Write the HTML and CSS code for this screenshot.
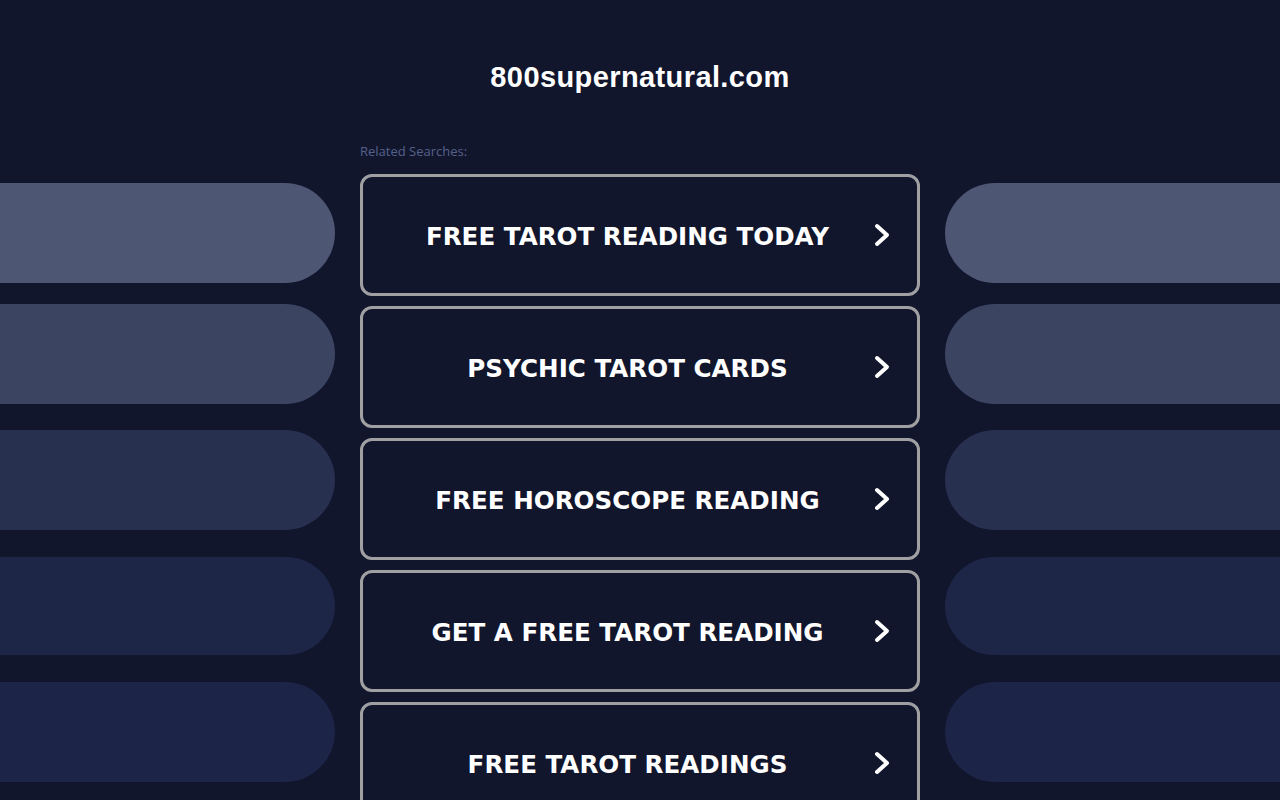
FILE: index.html
```html
<!DOCTYPE html>
<html lang="en">
<head>
<meta charset="utf-8">
<title>800supernatural.com</title>
<link rel="stylesheet" href="styles.css">
</head>
<body>
<header class="header">
  <h1 class="domain">800supernatural.com</h1>
</header>
<div class="layout">
  <div class="rail rail-left">
    <div class="pill p1"></div>
    <div class="pill p2"></div>
    <div class="pill p3"></div>
    <div class="pill p4"></div>
    <div class="pill p5"></div>
  </div>
  <main class="main">
    <div class="related">Related Searches:</div>
    <ul class="links">
      <li><a class="link" href="#"><span class="label">FREE TAROT READING TODAY</span><svg class="chev" viewBox="0 0 16 24" width="16" height="24"><path d="M3 3 L13 12 L3 21"/></svg></a></li>
      <li><a class="link" href="#"><span class="label">PSYCHIC TAROT CARDS</span><svg class="chev" viewBox="0 0 16 24" width="16" height="24"><path d="M3 3 L13 12 L3 21"/></svg></a></li>
      <li><a class="link" href="#"><span class="label">FREE HOROSCOPE READING</span><svg class="chev" viewBox="0 0 16 24" width="16" height="24"><path d="M3 3 L13 12 L3 21"/></svg></a></li>
      <li><a class="link" href="#"><span class="label">GET A FREE TAROT READING</span><svg class="chev" viewBox="0 0 16 24" width="16" height="24"><path d="M3 3 L13 12 L3 21"/></svg></a></li>
      <li><a class="link" href="#"><span class="label">FREE TAROT READINGS</span><svg class="chev" viewBox="0 0 16 24" width="16" height="24"><path d="M3 3 L13 12 L3 21"/></svg></a></li>
    </ul>
  </main>
  <div class="rail rail-right">
    <div class="pill p1"></div>
    <div class="pill p2"></div>
    <div class="pill p3"></div>
    <div class="pill p4"></div>
    <div class="pill p5"></div>
  </div>
</div>
</body>
</html>
```

FILE: styles.css
```css
html, body {
  margin: 0;
  padding: 0;
  background: #11162d;
  height: 100%;
  overflow: hidden;
}

body {
  font-family: "Liberation Sans", Arial, sans-serif;
  color: #ffffff;
}

.header {
  padding-top: 60px;
  height: 84px;
  text-align: center;
}

.domain {
  margin: 0;
  font-family: "Liberation Sans", Arial, sans-serif;
  font-weight: bold;
  font-size: 29px;
  line-height: 34px;
  letter-spacing: 0.4px;
  color: #ffffff;
}

.layout {
  display: grid;
  grid-template-columns: 335px 560px 335px;
  column-gap: 25px;
}

.rail {
  display: flex;
  flex-direction: column;
  padding-top: 39px;
}

.pill {
  height: 100px;
  background: #4d5673;
}

.rail-left .pill {
  border-radius: 0 50px 50px 0;
}

.rail-right .pill {
  border-radius: 50px 0 0 50px;
}

.pill.p2 { margin-top: 21px; background: #3b4461; }
.pill.p3 { margin-top: 26px; background: #283050; }
.pill.p4 { margin-top: 27px; background: #1e2648; height: 98px; }
.pill.p5 { margin-top: 27px; background: #1c2447; }

.main {
  display: flex;
  flex-direction: column;
}

.related {
  font-family: "Open Sans", "Noto Sans", sans-serif;
  font-size: 13px;
  line-height: 15px;
  color: #56618a;
  height: 30px;
}

.links {
  list-style: none;
  margin: 0;
  padding: 0;
  display: flex;
  flex-direction: column;
  gap: 10px;
}

.link {
  display: flex;
  align-items: center;
  height: 116px;
  border: 3px solid #a0a0a2;
  border-radius: 12px;
  text-decoration: none;
  color: #ffffff;
}

.label {
  flex: 1;
  text-align: center;
  padding-left: 18px;
  padding-top: 3px;
  font-family: "DejaVu Sans", Verdana, sans-serif;
  font-weight: bold;
  font-size: 24.6px;
  line-height: 30px;
}

.chev {
  margin-right: 27px;
  fill: none;
  stroke: #ffffff;
  stroke-width: 4;
  stroke-linecap: round;
  stroke-linejoin: round;
}
```
